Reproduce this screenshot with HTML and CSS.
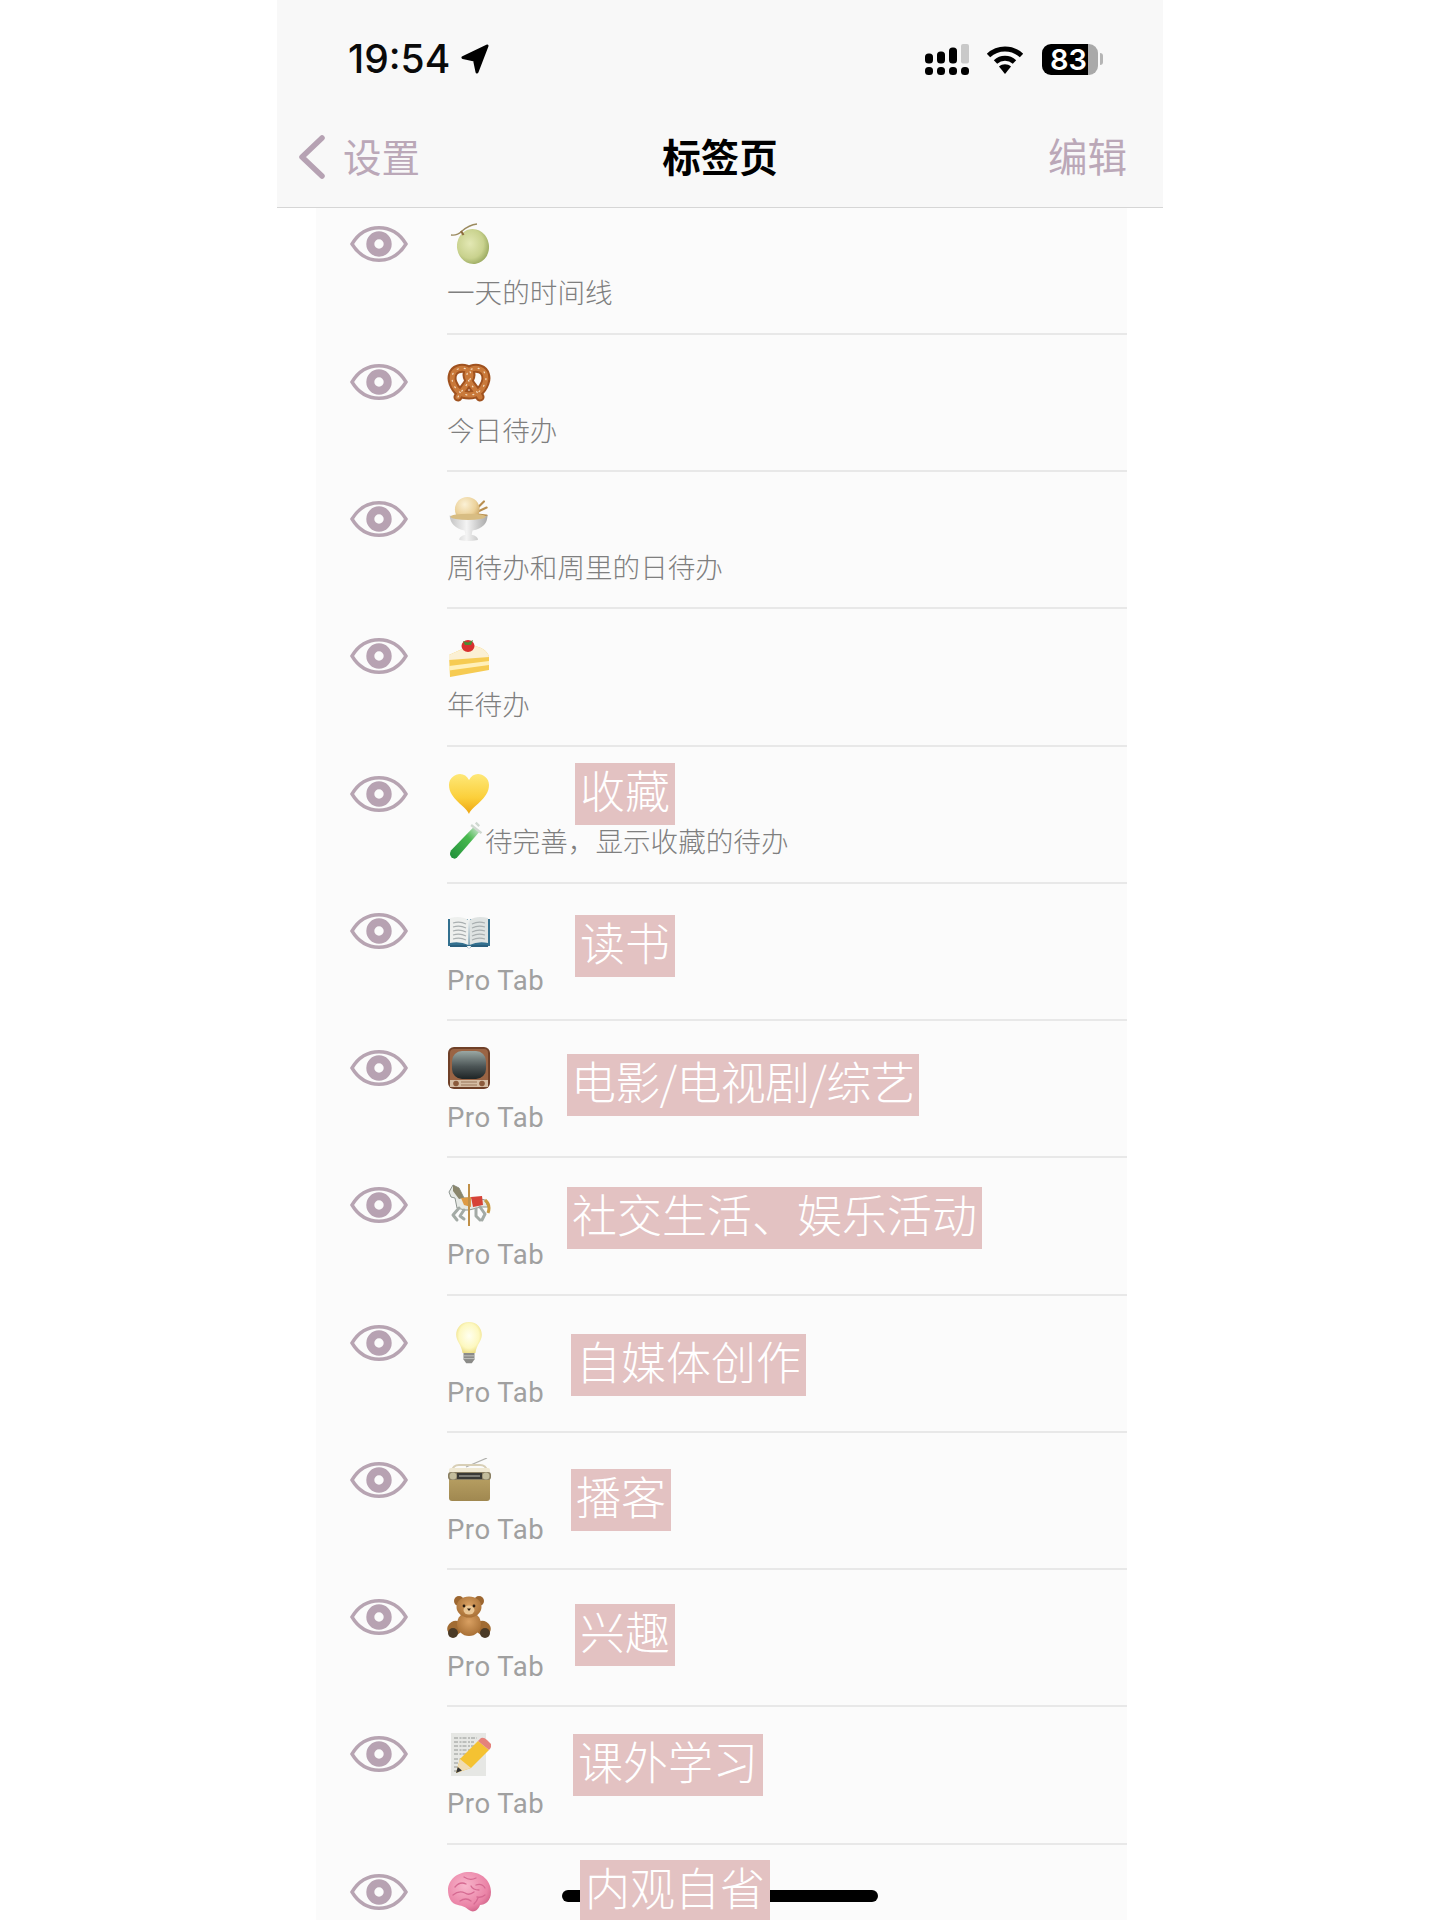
FILE: index.html
```html
<!DOCTYPE html>
<html lang="zh-CN">
<head>
<meta charset="utf-8">
<title>标签页</title>
<link rel="stylesheet" href="styles.css">
</head>
<body>
<svg class="defs" width="0" height="0" aria-hidden="true">
  <defs>
    <symbol id="eye" viewBox="0 0 58 36">
      <path d="M2 18C9 6.500 18 1.800 29 1.800S49 6.500 56 18C49 29.500 40 34.200 29 34.200S9 29.500 2 18Z" fill="none" stroke="#b7a4b2" stroke-width="3.400"/>
      <circle cx="29" cy="18" r="8.700" fill="none" stroke="#b7a2b2" stroke-width="8"/>
    </symbol>
    <radialGradient id="gMelon" cx=".42" cy=".4" r=".65"><stop offset="0" stop-color="#e3e8b4"/><stop offset=".65" stop-color="#c9d28e"/><stop offset="1" stop-color="#96a65c"/></radialGradient>
    <radialGradient id="gScoop" cx=".4" cy=".3" r=".75"><stop offset="0" stop-color="#fbf1d6"/><stop offset=".6" stop-color="#ecd29b"/><stop offset="1" stop-color="#c79f5c"/></radialGradient>
    <linearGradient id="gBowl" x1="0" x2="1"><stop offset="0" stop-color="#c4c4c4"/><stop offset=".45" stop-color="#f4f4f4"/><stop offset="1" stop-color="#a9a9a9"/></linearGradient>
    <linearGradient id="gHeart" x1="0" y1="0" x2="0" y2="1"><stop offset="0" stop-color="#fee878"/><stop offset=".6" stop-color="#fbcf3a"/><stop offset="1" stop-color="#eda512"/></linearGradient>
    <linearGradient id="gScreen" x1="0" y1="0" x2="0" y2="1"><stop offset="0" stop-color="#9aa8a4"/><stop offset=".55" stop-color="#4c5556"/><stop offset="1" stop-color="#1e2425"/></linearGradient>
    <radialGradient id="gBulb" cx=".5" cy=".45" r=".6"><stop offset="0" stop-color="#fffff0"/><stop offset=".65" stop-color="#fdf8c0"/><stop offset="1" stop-color="#e9d878"/></radialGradient>
    <linearGradient id="gRadio" x1="0" y1="0" x2="0" y2="1"><stop offset="0" stop-color="#b9a164"/><stop offset="1" stop-color="#a08850"/></linearGradient>
    <radialGradient id="gBear" cx=".5" cy=".4" r=".65"><stop offset="0" stop-color="#d9a062"/><stop offset="1" stop-color="#a46c32"/></radialGradient>
    <radialGradient id="gBrain" cx=".4" cy=".35" r=".75"><stop offset="0" stop-color="#f8b6cc"/><stop offset=".7" stop-color="#ea83a6"/><stop offset="1" stop-color="#c85a80"/></radialGradient>
    <linearGradient id="gTube" x1="0" y1="1" x2="1" y2="0"><stop offset="0" stop-color="#1f8f3a"/><stop offset=".65" stop-color="#49b94f"/><stop offset="1" stop-color="#d5e8d8"/></linearGradient>

    <symbol id="e-melon" viewBox="0 0 44 44">
      <ellipse cx="26" cy="24.500" rx="16" ry="17.500" transform="rotate(-10 26 24.500)" fill="url(#gMelon)"/>
      <path d="M4 13Q10 14 15 9 22 3 30 2" fill="none" stroke="#9b8a5e" stroke-width="1.300"/>
      <path d="M14 9l2.500 4" stroke="#8d6a3c" stroke-width="2"/>
    </symbol>
    <symbol id="e-pretzel" viewBox="0 0 44 44">
      <g fill="none" stroke-linecap="round" stroke-linejoin="round">
        <path d="M11 37C15 29 24 22 24 15 24 9 16 7 11 9 5 11 4 18 6 23 9 31 15 35 22 35 29 35 35 31 38 23 40 18 39 11 33 9 28 7 20 9 20 15 20 22 29 29 33 37" stroke="#a0521f" stroke-width="9"/>
        <path d="M11 37C15 29 24 22 24 15 24 9 16 7 11 9 5 11 4 18 6 23 9 31 15 35 22 35 29 35 35 31 38 23 40 18 39 11 33 9 28 7 20 9 20 15 20 22 29 29 33 37" stroke="#c9793a" stroke-width="5"/>
        <path d="M11 37C15 29 24 22 24 15 24 9 16 7 11 9 5 11 4 18 6 23 9 31 15 35 22 35 29 35 35 31 38 23 40 18 39 11 33 9 28 7 20 9 20 15 20 22 29 29 33 37" stroke="#f4dcc0" stroke-width="1.200" stroke-dasharray="1 6"/>
      </g>
    </symbol>
    <symbol id="e-icecream" viewBox="0 0 44 50">
      <path d="M30 14l9-9M31 17l11-5M32 20l10 1" stroke="#b98f50" stroke-width="2.400" stroke-linecap="round"/>
      <circle cx="20" cy="14" r="14" fill="url(#gScoop)"/>
      <path d="M0 21Q20 29 43 21 43 35 26 38L25 43Q33 45 32 49 21 51 11 49 10 45 18 43L17 38Q1 35 0 21Z" fill="url(#gBowl)"/>
      <ellipse cx="21" cy="22.500" rx="20" ry="3.500" fill="#d8bd83"/>
    </symbol>
    <symbol id="e-cake" viewBox="0 0 44 44">
      <path d="M2 21 24 11Q40 14 42 23L42 36 3 43Z" fill="#f6cb52"/>
      <path d="M2 21 24 11Q40 14 42 23L2 26Z" fill="#fbf0d4"/>
      <path d="M2 32 42 27V31L2 36.500Z" fill="#fff0ba"/>
      <ellipse cx="21" cy="12" rx="6.500" ry="6" fill="#d8302f"/>
      <path d="M16 7l5 1.500 5-2.500-2 5h-6Z" fill="#4f8a33"/>
    </symbol>
    <symbol id="e-heart" viewBox="0 0 44 44">
      <path d="M22 42C19 34 2 27 2 13 2 6 8 2 13 2 17 2 20 4 22 8 24 4 27 2 31 2 36 2 42 6 42 13 42 27 25 34 22 42Z" fill="url(#gHeart)"/>
    </symbol>
    <symbol id="e-tube" viewBox="0 0 32 36">
      <path d="M5 34Q0 32 2.500 27L22 7 27 11 8 33Q6.500 34.500 5 34Z" fill="url(#gTube)"/>
      <path d="M20 5l9 7M24 3l3 3" stroke="#cfd8d0" stroke-width="2"/>
    </symbol>
    <symbol id="e-book" viewBox="0 0 44 44">
      <path d="M1 10H21L22 37H1Z M43 10H23L22 37H43Z" fill="#33708f"/>
      <path d="M3 36H19L22 40 25 36H41V38H24L22 40 20 38H3Z" fill="#2a5f7d"/>
      <path d="M3 9Q14 6 21.500 11V36Q13 32 3 34Z" fill="#eef0ee"/>
      <path d="M41 9Q30 6 22.500 11V36Q31 32 41 34Z" fill="#dfe3e2"/>
      <path d="M6 14Q13 12 19 15M6 18Q13 16 19 19M6 22Q13 20 19 23M6 26Q13 24 19 27M6 30Q13 28 19 31M38 14Q31 12 25 15M38 18Q31 16 25 19M38 22Q31 20 25 23M38 26Q31 24 25 27M38 30Q31 28 25 31" fill="none" stroke="#a9afb0" stroke-width="1.200"/>
    </symbol>
    <symbol id="e-tv" viewBox="0 0 44 44">
      <rect x="1" y="1" width="42" height="42" rx="6" fill="#6f4028"/>
      <rect x="3" y="3" width="38" height="38" rx="4" fill="#9a6444"/>
      <rect x="5" y="5" width="34" height="28" rx="10" fill="url(#gScreen)"/>
      <rect x="3" y="34" width="38" height="7" fill="#d5bda4"/>
      <circle cx="9" cy="37.500" r="2.800" fill="#8c5b3c"/><circle cx="35" cy="37.500" r="2.800" fill="#8c5b3c"/>
      <path d="M14 36H30M14 39H30" stroke="#9a775a" stroke-width="1"/>
    </symbol>
    <symbol id="e-horse" viewBox="0 0 44 44">
      <path d="M2 9 6 2 12 5 17 15 30 15 38 17 41 24 36 24 34 24 22 27 18 27 10 25 8 15 4 14Z" fill="#e6e9e5" stroke="#8d9590" stroke-width="1"/>
      <path d="M12 25 6 32 10 37M17 27 13 33 17 36M33 24 38 31 35 37M29 26 29 33 33 37" fill="none" stroke="#a3aaa5" stroke-width="3" stroke-linecap="round" stroke-linejoin="round"/>
      <path d="M6 2 12 5 17 15 12 16 6 8Z" fill="#8a866c"/>
      <path d="M24 14 35 13 36 22 26 24Z" fill="#d64237"/>
      <path d="M14 15 24 14 24 24 17 22Z" fill="#dd9a45"/>
      <path d="M38 17Q44 22 41 30" fill="none" stroke="#c9993f" stroke-width="3"/>
      <path d="M22 1V43" stroke="#c09048" stroke-width="2"/>
    </symbol>
    <symbol id="e-bulb" viewBox="0 0 44 48">
      <path d="M22 1C13 1 8 8 8 15 8 22 14 26 15 35H29C30 26 36 22 36 15 36 8 31 1 22 1Z" fill="url(#gBulb)"/>
      <path d="M16 35H28V42L25 46H19L16 42Z" fill="#8b8b88"/>
      <path d="M16 38H28M16 41H28" stroke="#c4c4c0" stroke-width="1"/>
    </symbol>
    <symbol id="e-radio" viewBox="0 0 44 44">
      <path d="M19 9 40 0" stroke="#b1b1ad" stroke-width="1.300"/>
      <path d="M5 13Q6 7 12 7H33Q39 7 40 13" fill="none" stroke="#d8cfb6" stroke-width="2"/>
      <rect x="2" y="10" width="41" height="8" rx="2" fill="#efe8d2"/>
      <rect x="2" y="17" width="41" height="26" rx="3" fill="url(#gRadio)"/>
      <rect x="1" y="14" width="43" height="8" rx="3" fill="#8a7f62"/>
      <rect x="10" y="15" width="25" height="6" fill="#3a3a36"/>
      <path d="M12 18H33" stroke="#bfbfb6" stroke-width="1"/>
      <circle cx="6" cy="18" r="3.500" fill="#c2bc9c"/><circle cx="39" cy="18" r="3.500" fill="#c2bc9c"/>
    </symbol>
    <symbol id="e-bear" viewBox="0 0 44 44">
      <circle cx="12" cy="6" r="5" fill="#9c6630"/><circle cx="32" cy="6" r="5" fill="#9c6630"/>
      <ellipse cx="8" cy="33" rx="8" ry="7" transform="rotate(-30 8 33)" fill="#a16c33"/>
      <ellipse cx="36" cy="33" rx="8" ry="7" transform="rotate(30 36 33)" fill="#a16c33"/>
      <circle cx="6" cy="38" r="5" fill="#4a3a26"/><circle cx="38" cy="38" r="5" fill="#4a3a26"/>
      <ellipse cx="22" cy="29" rx="12" ry="12" fill="url(#gBear)"/>
      <ellipse cx="22" cy="12" rx="12.500" ry="10.500" fill="url(#gBear)"/>
      <ellipse cx="22" cy="15" rx="5.500" ry="4.500" fill="#eac694"/>
      <circle cx="17" cy="11" r="1.400" fill="#2a1c10"/><circle cx="27" cy="11" r="1.400" fill="#2a1c10"/>
      <path d="M20 13.500h4l-2 2.500Z" fill="#2a1c10"/>
    </symbol>
    <symbol id="e-memo" viewBox="0 0 44 44">
      <rect x="4" y="1" width="35" height="43" fill="#e6e7e4"/>
      <path d="M7 6H30M7 10H27M7 14H29M7 18H24M7 22H20M7 27H16M7 31H15M7 35H13M7 39H12" fill="none" stroke="#8a8d8a" stroke-width=".9" stroke-dasharray="4 1.500 2 1"/>
      <path d="M9 41 13 27 31 9 42 18 24 36Z" fill="#f4c232"/>
      <path d="M31 9 34 6Q37 5 40 8L44 12Q45 15 42 18Z" fill="#e5827b"/>
      <path d="M9 41 13 27 24 36Z" fill="#f0dcb4"/>
      <path d="M9 41 10.800 35 15 38.500Z" fill="#333"/>
    </symbol>
    <symbol id="e-brain" viewBox="0 0 44 44">
      <path d="M1 20C1 10 10 2 22 2 35 2 44 11 44 22 44 31 38 35 33 35 31 41 26 43 22 40 18 37 16 36 11 35 4 34 1 27 1 20Z" fill="url(#gBrain)"/>
      <path d="M8 17Q13 11 19 14M6 25Q12 20 18 23 22 26 27 22M17 7Q23 11 29 8M29 15Q35 13 38 18M24 16Q26 20 32 20M13 31Q19 27 24 31M30 27Q35 28 38 25M27 34Q30 31 31 28" fill="none" stroke="#d66a92" stroke-width="1.300" stroke-linecap="round"/>
    </symbol>
  </defs>
</svg>

<div class="phone">
  <header class="header">
    <div class="status">
      <div class="status-left">
        <span class="time">19:54</span>
        <svg class="loc" viewBox="0 0 28 30"><path d="M26 2 2 13.500 13.500 16 16 28Z" fill="#000" stroke="#000" stroke-width="3" stroke-linejoin="round"/></svg>
      </div>
      <div class="status-right">
        <svg class="signal" viewBox="0 0 44 31">
          <rect x="0" y="9.500" width="8" height="10" rx="3.500"/><rect x="12" y="7.500" width="8" height="12" rx="3.500"/><rect x="24" y="3.500" width="8" height="16" rx="3.500"/><rect x="36" y="0" width="8" height="19.500" rx="2" fill="#c9c9c9"/>
          <rect x="0" y="23" width="8" height="8" rx="3.500"/><rect x="12" y="23" width="8" height="8" rx="3.500"/><rect x="24" y="23" width="8" height="8" rx="3.500"/><rect x="36" y="23" width="8" height="8" rx="3.500"/>
        </svg>
        <svg class="wifi" viewBox="0 0 38 29">
          <path d="M2.500 10.500C12 1.800 26 1.800 35.500 10.500" fill="none" stroke="#000" stroke-width="5"/>
          <path d="M9.500 17C15 12 23 12 28.500 17" fill="none" stroke="#000" stroke-width="5"/>
          <path d="M13 21.500C16.500 18.500 21.500 18.500 25 21.500L19 29Z" fill="#000"/>
        </svg>
        <div class="battery"><span class="batt-num">83</span></div>
        <span class="batt-nub"></span>
      </div>
    </div>
    <nav class="nav">
      <div class="nav-back">
        <svg class="chev" viewBox="0 0 28 44"><path d="M24 3 4 22 24 41" fill="none" stroke="#b6a2b3" stroke-width="5.500" stroke-linecap="round" stroke-linejoin="round"/></svg>
        <span class="nav-link">设置</span>
      </div>
      <div class="nav-title">标签页</div>
      <div class="nav-edit"><span class="nav-link">编辑</span></div>
    </nav>
  </header>

  <main class="list">
    <section class="row row-first">
      <svg class="eye"><use href="#eye"/></svg>
      <div class="main"><svg class="emoji"><use href="#e-melon"/></svg><p class="sub">一天的时间线</p></div>
    </section>
    <section class="row">
      <svg class="eye"><use href="#eye"/></svg>
      <div class="main"><svg class="emoji"><use href="#e-pretzel"/></svg><p class="sub">今日待办</p></div>
    </section>
    <section class="row">
      <svg class="eye"><use href="#eye"/></svg>
      <div class="main"><svg class="emoji"><use href="#e-icecream"/></svg><p class="sub">周待办和周里的日待办</p></div>
    </section>
    <section class="row">
      <svg class="eye"><use href="#eye"/></svg>
      <div class="main"><svg class="emoji"><use href="#e-cake"/></svg><p class="sub">年待办</p></div>
    </section>
    <section class="row">
      <svg class="eye"><use href="#eye"/></svg>
      <div class="main"><svg class="emoji"><use href="#e-heart"/></svg><p class="sub sub-tube"><svg class="tube"><use href="#e-tube"/></svg>待完善，显示收藏的待办</p></div>
      <span class="tag tag-fav">收藏</span>
    </section>
    <section class="row">
      <svg class="eye"><use href="#eye"/></svg>
      <div class="main"><svg class="emoji"><use href="#e-book"/></svg><p class="sub pro">Pro Tab</p></div>
      <span class="tag tag-read">读书</span>
    </section>
    <section class="row">
      <svg class="eye"><use href="#eye"/></svg>
      <div class="main"><svg class="emoji"><use href="#e-tv"/></svg><p class="sub pro">Pro Tab</p></div>
      <span class="tag tag-film">电影/电视剧/综艺</span>
    </section>
    <section class="row">
      <svg class="eye"><use href="#eye"/></svg>
      <div class="main"><svg class="emoji"><use href="#e-horse"/></svg><p class="sub pro">Pro Tab</p></div>
      <span class="tag tag-social">社交生活、娱乐活动</span>
    </section>
    <section class="row">
      <svg class="eye"><use href="#eye"/></svg>
      <div class="main"><svg class="emoji"><use href="#e-bulb"/></svg><p class="sub pro">Pro Tab</p></div>
      <span class="tag tag-media">自媒体创作</span>
    </section>
    <section class="row">
      <svg class="eye"><use href="#eye"/></svg>
      <div class="main"><svg class="emoji"><use href="#e-radio"/></svg><p class="sub pro">Pro Tab</p></div>
      <span class="tag tag-pod">播客</span>
    </section>
    <section class="row">
      <svg class="eye"><use href="#eye"/></svg>
      <div class="main"><svg class="emoji"><use href="#e-bear"/></svg><p class="sub pro">Pro Tab</p></div>
      <span class="tag tag-fun">兴趣</span>
    </section>
    <section class="row">
      <svg class="eye"><use href="#eye"/></svg>
      <div class="main"><svg class="emoji"><use href="#e-memo"/></svg><p class="sub pro">Pro Tab</p></div>
      <span class="tag tag-study">课外学习</span>
    </section>
    <section class="row">
      <svg class="eye"><use href="#eye"/></svg>
      <div class="main"><svg class="emoji"><use href="#e-brain"/></svg></div>
      <span class="tag tag-self">内观自省</span>
    </section>
  </main>
  <div class="home-bar"></div>
</div>
</body>
</html>
```
FILE: styles.css
```css
* { box-sizing: border-box; }
html, body { margin: 0; padding: 0; }
body {
  height: 1920px;
  overflow: hidden;
  background: #fff;
  font-family: "Noto Sans CJK SC", "Noto Sans", sans-serif;
}
.defs { position: absolute; }

.phone {
  position: relative;
  width: 886px;
  height: 1920px;
  margin: 0 auto;
  overflow: hidden;
  background: #fff;
}

/* header */
.header {
  position: relative;
  z-index: 3;
  height: 208px;
  background: #f8f8f8;
  border-bottom: 1px solid #d6d6d6;
}
.status {
  height: 118px;
  padding: 0 60px 0 71px;
  display: flex;
  align-items: center;
  justify-content: space-between;
}
.status-left { display: flex; align-items: center; gap: 11px; }
.time {
  font-family: Inter, "Liberation Sans", sans-serif;
  font-size: 39px;
  font-weight: 500;
  line-height: 44px;
  color: #0a0a0a;
}
.loc { width: 28px; height: 30px; }
.status-right { display: flex; align-items: center; }
.signal { width: 44px; height: 31px; fill: #000; margin-right: 17px; }
.wifi { width: 38px; height: 29px; margin-right: 18px; }
.battery {
  width: 56px;
  height: 31px;
  border-radius: 9px;
  background: linear-gradient(90deg, #000 0, #000 46px, #a9a9a9 46px);
  padding-left: 8px;
  display: flex;
  align-items: center;
}
.batt-num {
  font-family: Inter, "Liberation Sans", sans-serif;
  font-size: 29px;
  font-weight: 600;
  line-height: 31px;
  color: #fff;
}
.batt-nub {
  width: 3px;
  height: 12px;
  margin-left: 2px;
  border-radius: 0 3px 3px 0;
  background: #b5b5b5;
}
.nav {
  height: 73px;
  padding: 0 36px;
  display: grid;
  grid-template-columns: 1fr auto 1fr;
  align-items: center;
}
.nav-back { display: flex; align-items: center; gap: 17px; margin-left: -15px; }
.chev { width: 28px; height: 44px; margin-top: 5px; }
.nav-link { font-size: 38.500px; line-height: 50px; color: #bba8b8; }
.nav-title { font-size: 38.500px; line-height: 50px; font-weight: 700; color: #000; }
.nav-edit { text-align: right; }
.nav-edit .nav-link { font-size: 39.500px; }

/* list */
.list {
  margin: 0 36px 0 39px;
  background: #fbfbfb;
}
.row {
  position: relative;
  display: flex;
  height: 137.250px;
  padding-left: 34px;
}
.row-first { height: 126.750px; }
.eye {
  flex: none;
  width: 58px;
  height: 36px;
  margin-top: 29px;
  margin-right: 39px;
}
.row-first .eye { margin-top: 18px; }
.main {
  flex: 1;
  display: flex;
  flex-direction: column;
  padding-top: 25px;
  border-bottom: 2px solid #e8e8e8;
}
.row-first .main { padding-top: 14px; }
.emoji {
  flex: none;
  display: block;
  width: 44px;
  height: 44px;
}
.sub {
  margin: 6px 0 0;
  font-size: 27.600px;
  line-height: 38px;
  font-weight: 300;
  color: #7f7f7f;
  white-space: nowrap;
}
.sub-tube { display: flex; align-items: center; margin-top: 5.500px; }
.tube { flex: none; width: 37px; height: 42px; margin: -4px 0 -4px 1px; }
.pro {
  margin-top: 9px;
  font-family: Roboto, "Noto Sans", sans-serif;
  font-weight: 400;
  font-size: 27.500px;
  letter-spacing: .5px;
  color: #a0a0a0;
}

/* pink stickers */
.tag {
  position: absolute;
  z-index: 2;
  height: 62px;
  padding: 0 5px;
  background: #e3c2c2;
  color: #fff;
  font-size: 45px;
  font-weight: 300;
  line-height: 54px;
  white-space: nowrap;
}
.tag-fav { left: 259px; top: 16px; }
.tag-read { left: 259px; top: 31px; }
.tag-film { left: 251px; top: 32.500px; letter-spacing: -.75px; padding: 0 4px; }
.tag-social { left: 251px; top: 29px; }
.tag-media { left: 255px; top: 38px; }
.tag-pod { left: 255px; top: 36px; }
.tag-fun { left: 259px; top: 33.500px; }
.tag-study { left: 257px; top: 27px; }
.tag-self { left: 264px; top: 15px; height: 70px; }

.home-bar {
  position: absolute;
  z-index: 1;
  left: 285px;
  top: 1890px;
  width: 316px;
  height: 12px;
  border-radius: 6px;
  background: #000;
}
```
